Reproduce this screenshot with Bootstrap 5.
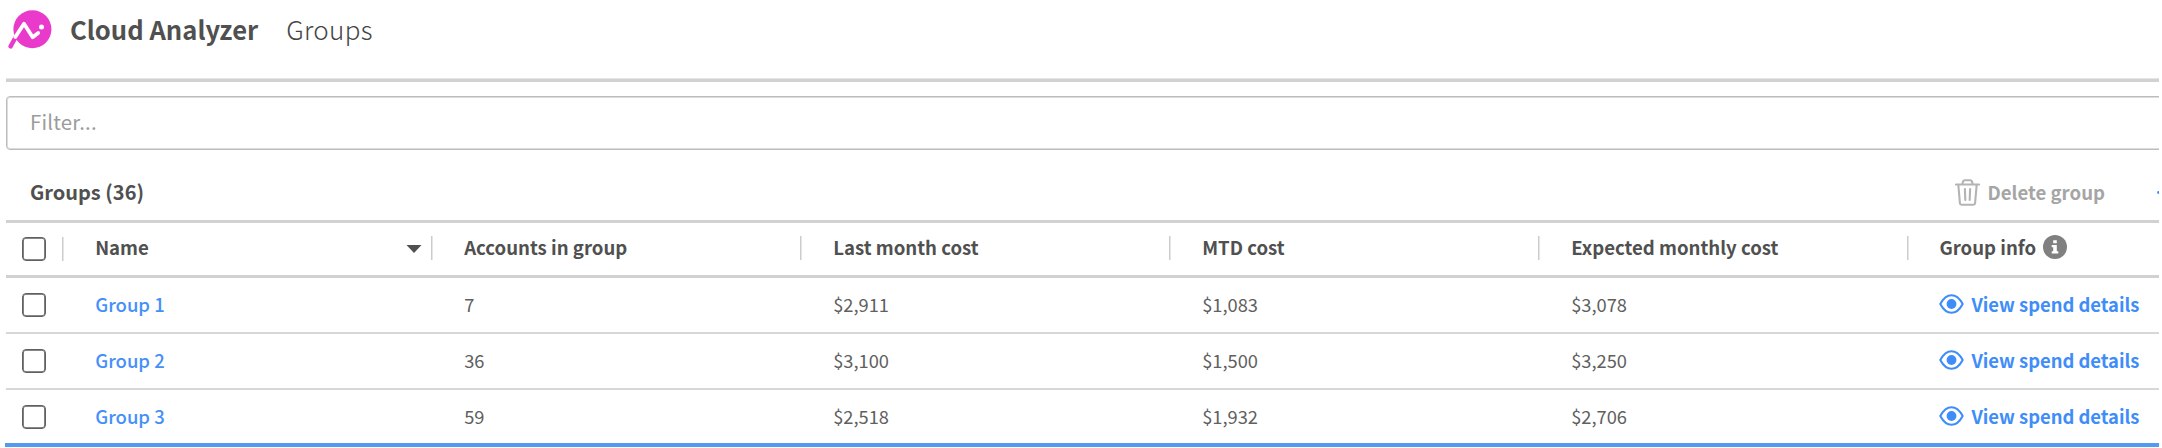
<!DOCTYPE html>
<html lang="en">
<head>
<meta charset="utf-8">
<title>Cloud Analyzer - Groups</title>
<link href="https://cdn.jsdelivr.net/npm/bootstrap@5.3.0/dist/css/bootstrap.min.css" rel="stylesheet">
<style>
  body { font-family: "Noto Sans CJK SC", "Noto Sans", sans-serif; color: #505050; background: #fff; font-size: 18.6px; line-height: 28px; overflow: hidden; }
  .page { width: 2159px; height: 448px; padding-left: 6px; overflow: hidden; }
  .topbar { height: 82px; padding-bottom: 21px; border-bottom: 3px solid #d0d1d2; box-shadow: inset 0 -1px #e4e5e6; }
  .logo { margin-left: 2px; }
  .brand { font-size: 25.6px; margin-left: 18px; }
  .crumb { font-size: 26px; font-weight: 300; margin-left: 28px; letter-spacing: .3px; color: #454545; }
  .filter { height: 54px; width: 2200px; margin-top: 14px; border: 1px solid #bcbcbc; border-radius: 4px; padding: 0 23px 5px; font-size: 20.4px; letter-spacing: .2px; color: #505050; background: #fff; outline: 0; box-shadow: inset 0 0 0 1px #dcdcdc; }
  .filter::placeholder { color: #9c9c9c; opacity: 1; }
  .tools { height: 70px; padding-left: 24px; padding-top: 28px; }
  .tools h2 { font-size: 20px; line-height: 28px; }
  .del { width: 204px; color: #a5a5a5; }
  .del svg { margin-right: 7.5px; }
  .grid-row { display: grid; grid-template-columns: 56px repeat(5, 369px) 1fr; height: 56px; border-bottom: 2px solid #d7d7d7; }
  .grid-row > div { display: flex; align-items: center; padding: 0 0 3px 33.2px; }
  .grid-row > div:last-child { padding-left: 32.4px; }
  .grid-row > .pick { padding: 0 0 0 16px; }
  .grid-head { height: 58px; border-top: 3px solid #d0d1d1; border-bottom: 3px solid #d0d1d1; font-weight: 700; }
  .grid-head > div + div { padding-bottom: 5px; background: linear-gradient(#ccc, #ccc) 0 13px / 1.5px 24px no-repeat; }
  .grid-head > div:nth-child(2) { background-position: 0 14px; }
  .grid-body { font-size: 18.3px; color: #606060; }
  .form-check-input.box { width: 24px; height: 24px; margin: 0; border: 1px solid #606060; border-radius: 4px; box-shadow: inset 0 0 0 .8px #606060; }
  .name-link { color: #468ff8; font-weight: 500; text-decoration: none; font-size: 18.5px; }
  .view-link { color: #3f8df8; font-weight: 700; text-decoration: none; font-size: 18.4px; }
  .view-link svg { margin-right: 7px; }
  .sort { width: 16px; height: 8px; margin: 4px 9px 0 auto; }
  .info { margin: 1px 0 0 7px; }
  .last-line { border-bottom: 4px solid #549af3; width: 2154px; margin: 0 0 0 -1px; }
  .last-line .grid-row { border: 0; height: 53px; margin-left: 1px; }
  .last-line .grid-row > div { height: 54px; }
</style>
</head>
<body>
<main class="page">
  <header class="topbar d-flex align-items-center">
    <svg class="logo" width="44" height="40" viewBox="0 0 44 40">
      <circle cx="24.4" cy="20.3" r="19" fill="#ea3acb"/>
      <path d="M2.600 37.400 7.600 28.200" stroke="#ea3acb" stroke-width="4.400" stroke-linecap="round" fill="none"/>
      <path d="M7.300 28 16 14.800 24.700 28.200 30.200 24" stroke="#fff" stroke-width="3.800" stroke-linecap="round" stroke-linejoin="round" fill="none"/>
      <circle cx="33.500" cy="18" r="2.500" fill="#fff"/>
    </svg>
    <span class="brand fw-bold">Cloud Analyzer</span>
    <span class="crumb">Groups</span>
  </header>
  <input class="filter d-block" type="text" placeholder="Filter..." aria-label="Filter">
  <div class="tools d-flex justify-content-between">
    <h2 class="fw-bold mb-0">Groups (36)</h2>
    <div class="del d-flex align-items-center align-self-start fw-bold">
      <svg width="25" height="27" viewBox="0 0 25 27" fill="none" stroke="#b4b4b4" stroke-width="2.1" stroke-linecap="round" stroke-linejoin="round"><path d="M1 5.500h23M7.300 5 8 2.600Q8.400 1.200 9.800 1.200h5.400q1.400 0 1.800 1.400L17.700 5M3.300 5.500 4.900 24Q5.100 25.800 6.900 25.800H18.100Q19.900 25.800 20.100 24L21.700 5.500M9.900 10 10.300 21M15.100 10 14.700 21"/></svg>
      <span>Delete group</span>
      <svg class="ms-auto me-0" width="2" height="3" viewBox="0 0 2 3"><circle cx="1.500" cy="1.500" r="1.400" fill="#3f8df8"/></svg>
    </div>
  </div>
  <section>
    <div class="grid-row grid-head">
      <div class="pick"><input type="checkbox" class="form-check-input box" aria-label="Select all"></div>
      <div>Name<svg class="sort" viewBox="0 0 16 8"><path d="M.5 0h15L8 8z" fill="#505050"/></svg></div>
      <div>Accounts in group</div>
      <div>Last month cost</div>
      <div>MTD cost</div>
      <div>Expected monthly cost</div>
      <div>Group info<svg class="info" width="24" height="24" viewBox="0 0 24 24"><circle cx="12" cy="12" r="12" fill="#808080"/><path fill="#fff" d="M10.200 5.200h3.600v3h-3.600zM8.700 10h5.100v6.200h1.500v2.200H8.700v-2.200h1.500v-4H8.700z"/></svg></div>
    </div>
    <div class="grid-body" id="rows"></div>
  </section>
</main>
<script src="https://cdn.jsdelivr.net/npm/bootstrap@5.3.0/dist/js/bootstrap.bundle.min.js"></script>
<script>
  const eye = '<svg width="25" height="20" viewBox="0 0 25 20"><path d="M1.300 10Q6 1.200 12.500 1.200T23.700 10Q19 18.800 12.500 18.800T1.300 10z" fill="none" stroke="#3f8df8" stroke-width="2.100" stroke-linejoin="round"/><circle cx="12.500" cy="10" r="4.900" fill="#3f8df8"/></svg>';
  const data = [
    ['Group 1', '7', '$2,911', '$1,083', '$3,078'],
    ['Group 2', '36', '$3,100', '$1,500', '$3,250'],
    ['Group 3', '59', '$2,518', '$1,932', '$2,706']
  ];
  document.getElementById('rows').innerHTML = data.map(([name, ...vals], i) => {
    const row = `<div class="grid-row">
      <div class="pick"><input type="checkbox" class="form-check-input box" aria-label="Select ${name}"></div>
      <div><a class="name-link" href="#">${name}</a></div>
      ${vals.map(v => `<div>${v}</div>`).join('')}
      <div><a class="view-link d-flex align-items-center text-nowrap" href="#">${eye}<span>View spend details</span></a></div></div>`;
    return i === data.length - 1 ? `<div class="last-line">${row}</div>` : row;
  }).join('');
</script>
</body>
</html>
